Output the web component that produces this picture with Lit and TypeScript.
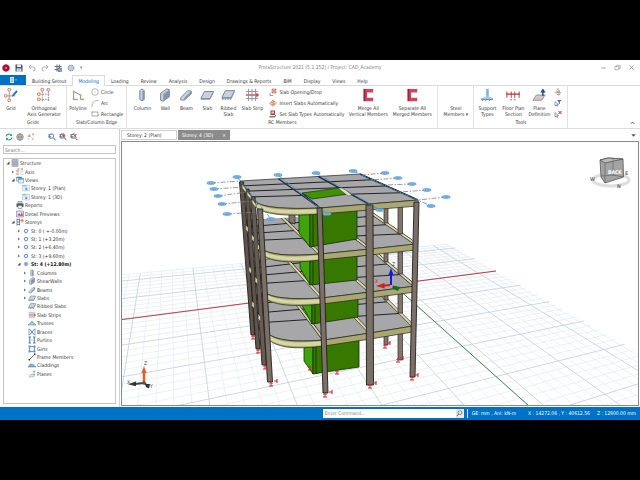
import { LitElement, html, svg, css, nothing, type TemplateResult } from "lit";
import { customElement } from "lit/decorators.js";
import { classMap } from "lit/directives/class-map.js";

type Art = ReturnType<typeof svg>;
type Pt = [number, number];

const pts = (...p: Pt[]) => p.map((q) => q.join(",")).join(" ");
const mix = (a: Pt, b: Pt, t: number): Pt => [a[0] + (b[0] - a[0]) * t, a[1] + (b[1] - a[1]) * t];
const f1 = (n: number) => n.toFixed(1);

/* ---------- icons, drawn on a 16 x 16 board ---------- */
const member = (d: string, side: string) => svg`
  <path d=${d} fill="#c9d1da" stroke="#6a7d90" stroke-width="1"/>
  <path d=${side} fill="#8496aa"/>`;
const bubble = (x: number, y: number) =>
  svg`<circle cx=${x} cy=${y} r="1.7" fill="#fbe3da" stroke="#d0694a" stroke-width=".9"/>`;
const bracket = svg`<path d="M14 1H3v14h11v-4H7V5h7z" fill="#d0455c"/><path d="M3 1h2v14H3z" fill="#9c2540"/>`;
const lens = svg`<circle cx="7" cy="6" r="4.6" fill="#eef4fa" stroke="#4b6177" stroke-width="1.4"/><path d="M10.500 9.500L15 14.500" stroke="#4b6177" stroke-width="2"/>`;
const tree = svg`<path d="M1 3h6M2 3v7h4M1 7h5" stroke="#3f7fb5" stroke-width="1.300" fill="none"/>`;
const cursor = svg`<path d="M2 5v9l2.200-2 1.600 3 1.400-.7-1.500-2.900H9z" fill="#fff" stroke="#333" stroke-width=".9"/>`;

const icons: Record<string, Art> = {
  logo: svg`<path d="M8 0l2 1.500 2.600-.1.800 2.400L15.600 5.400 14.900 8l.7 2.600-2.200 1.600-.8 2.400-2.600-.1L8 16l-2-1.500-2.600.1-.8-2.400L.4 10.600 1.100 8 .4 5.400l2.200-1.600.8-2.400 2.600.1z" fill="#b3092f"/><circle cx="8" cy="8" r="2.500" fill="#e68095"/><circle cx="8" cy="8" r="1.200" fill="#7c0620"/>`,
  save: svg`<path d="M1 1h12l2 2v12H1z" fill="#44566b"/><path d="M4 1h8v5H4z" fill="#e8edf2"/><path d="M3.500 9h9v6h-9z" fill="#fff"/><path d="M5 11h6M5 13h6" stroke="#7a8ea3"/>`,
  undo: svg`<path d="M2 6h8a4 4 0 0 1 0 8M2 6l4-4M2 6l4 4" fill="none" stroke="#9a9a9a" stroke-width="1.500"/>`,
  redo: svg`<path d="M14 6H6a4 4 0 0 0 0 8M14 6l-4-4M14 6l-4 4" fill="none" stroke="#9a9a9a" stroke-width="1.500"/>`,
  frame: svg`<path d="M6 1v14M11 1v14M1 5h14M1 11h10" stroke="#5b7088" stroke-width="2"/><path d="M8 8h7v7H8z" fill="#8fa6bd" stroke="#4a5f75"/>`,
  gear: svg`<circle cx="8" cy="8" r="5.500" fill="none" stroke="#7f96ad" stroke-width="2.500" stroke-dasharray="3 1.300"/><circle cx="8" cy="8" r="4" fill="#eaf0f6" stroke="#7f96ad"/><circle cx="8" cy="8" r="1.500" fill="#7f96ad"/>`,
  grid: svg`<path d="M6 4v9M3 9h10" stroke="#8a949e" stroke-width="1"/>${bubble(6, 2)}${bubble(1.9, 9)}${bubble(6, 14)}<path d="M9 10l1-3 4-4.500 1.800 1.400-4 4.800z" fill="#1d78bd"/>`,
  ortho: svg`<path d="M6 4v11M13 4v11M3 7h12M3 13h12" stroke="#7b8794" stroke-width="1" stroke-dasharray="2 1"/>${bubble(6, 2)}${bubble(13, 2)}${bubble(2, 7)}${bubble(2, 13)}`,
  polyline: svg`<path d="M3 13V4l8 4v5h3M3 13h5" fill="none" stroke="#7c8996" stroke-width="1.100"/><path d="M2 3h2v2H2zM10 7h2v2h-2zM2 12h2v2H2zM13 12h2v2h-2z" fill="#e3a15b"/>`,
  circle: svg`<circle cx="8" cy="8" r="6.600" fill="none" stroke="#8795a4" stroke-width="1.300"/><circle cx="8" cy="8" r="1" fill="#d98b4a"/>`,
  arc: svg`<path d="M2 14Q2 3 14 3" fill="none" stroke="#8795a4" stroke-width="1.300"/><path d="M1 13h2v2H1zM13 2h2v2h-2z" fill="#e3a15b"/>`,
  rect: svg`<path d="M2 4h12v8H2z" fill="none" stroke="#6f7f8f" stroke-width="1.300"/><path d="M1 3h2v2H1zM13 11h2v2h-2z" fill="#e3a15b"/>`,
  column: member("M5.500 3q2.500-3.500 5 0v10q-2.500 3-5 0z", "M8.500 3h2v10q-1 1.500-2 1.500z"),
  wall: member("M3 6l7-5 3 1v8l-7 5-3-1z", "M6 7l7-5v8l-7 5z"),
  beam: member("M2 11L10 3l4 .5v3L6 14l-4-.5z", "M6 11.500l8-8v3L6 14z"),
  slab: member("M1 12L5 4h10.500l-4 8z", "M1 12h10.500l4-8v1.500l-4 8H1z"),
  ribbed: member("M1 11L5 3h10.500l-4 8z", "M1 11h10.500l4-8v2l-4 8.500H10v-1.500H9V13.500H7V12H6v1.500H4V12H3v1.500H1z"),
  strip: svg`<path d="M1 4h14M1 12h14M4 1v14M8 1v14M12 1v14" stroke="#7d92a8" stroke-width="1"/><path d="M1 7h13v2H1z" fill="#df6b64"/><path d="M13 5l3 3-3 3z" fill="#c9403b"/>`,
  opening: svg`<path d="M2 15V9M2 15h6" stroke="#5f7387" stroke-width="1.300"/><path d="M6 2h8v8H6z" fill="#f3cdc7" stroke="#b6463c"/><path d="M6 10l8-8M6 2l8 8" stroke="#b6463c"/>`,
  insert: svg`<path d="M1 9l7-7 7 6-7 7z" fill="#f4d7cd" stroke="#c25a3f"/><path d="M5 10l6 2M5 7l6 2M7 4l4 2" stroke="#c25a3f" stroke-width="1.400"/>`,
  types: svg`<path d="M3 1h9v9H3z" fill="#cf2f2f"/><path d="M5 3h5v4H5z" fill="#f5d0c8"/><path d="M1 12h10l3-3v3l-3 3H1z" fill="#6c7c8c"/>`,
  bracket,
  support: svg`<path d="M7 1h3v11H7z" fill="#7fb6d8"/><path d="M1 12h14v1.500H1z" fill="#4f7f9f"/><path d="M4 13l-2 2M8 13l-2 2M12 13l-2 2" stroke="#4f7f9f"/><path d="M4 10h9v2H4z" fill="#a8d0e6"/>`,
  section: svg`<path d="M1 4v7M15 4v7M6 4v7M10 4v7" stroke="#c0504d" stroke-width="1.200"/><path d="M0 7h16" stroke="#c0392b" stroke-width="1.500"/><path d="M5 13.500h2M9 13.500h2" stroke="#666"/>`,
  plane: svg`<path d="M1 14L5 8h10l-4 6z" fill="#d9c4c0" stroke="#7c8fa3"/><path d="M12.500 9V3" stroke="#174f8a" stroke-width="1.600"/><path d="M9.500 5l3-4.500 3 4.500z" fill="#174f8a"/>`,
  selA: svg`<path d="M8 1l3 6H5z" fill="none" stroke="#c0504d"/><path d="M1 9h13M10 5v9" stroke="#666"/><path d="M5 12q4 4 8 0" fill="none" stroke="#d0694a" stroke-width="1.500"/>`,
  selB: svg`${cursor}<path d="M6 2h9l-3.500 4v4h-2V6z" fill="#1d78bd"/>`,
  selC: svg`${cursor}<path d="M9 2l6 6M15 2L9 8" stroke="#d0202e" stroke-width="2"/>`,
  refresh: svg`<path d="M2 7a6 6 0 0 1 11-2M14 9a6 6 0 0 1-11 2" fill="none" stroke="#25a39b" stroke-width="2.200"/><path d="M14 1v5H9zM2 15v-5h5z" fill="#25a39b"/>`,
  globe: svg`<circle cx="8" cy="8" r="6.500" fill="#d7e6ea" stroke="#4d6470" stroke-width="1.200"/><path d="M1.500 8h13M8 1.500v13" stroke="#b3563f" stroke-width="1.300"/><ellipse cx="8" cy="8" rx="3.200" ry="6.500" fill="none" stroke="#4c8a60"/>`,
  sort: svg`<path d="M2 8l3-5 2 5M3 6.500h3M10 1l4 2-3 1" fill="none" stroke="#c75c52" stroke-width="1.200"/><path d="M1 12h4M9 9l4 5M13 9l-3 5" stroke="#e09289" stroke-width="1.200"/>`,
  findA: svg`${lens}${tree}`,
  findB: svg`${lens}${tree}<path d="M9 1l4 4h-2v4H7V5H5z" fill="#e2503b"/>`,
  findC: svg`${lens}${tree}<path d="M6 2l7 7M13 2L6 9" stroke="#dd5a3c" stroke-width="2"/>`,
  structure: svg`<path d="M2 1h12v14H2z" fill="#dbe4ed"/><path d="M2 1v14M6 1v14M10 1v14M14 1v14M2 1.500h12M2 6h12M2 10h12M2 14.500h12" stroke="#5b738c" stroke-width="1.100"/>`,
  axis: svg`<path d="M5 3v12M12 3v12M2 6h13M2 12h13" stroke="#9aa6b2" stroke-dasharray="2 1"/>${bubble(5, 2)}${bubble(12, 2)}${bubble(2, 6)}${bubble(2, 12)}`,
  views: svg`<path d="M1 2h10v8H1z" fill="#cfe3f3" stroke="#4a86b5"/><path d="M5 5h10v9H5z" fill="#e3f0fa" stroke="#4a86b5"/><path d="M1 2h10v2H1zM5 5h10v2H5z" fill="#3f81b3"/>`,
  view: svg`<path d="M1 2h14v12H1z" fill="#e0eef8" stroke="#a9c5da"/><path d="M1 2h8v3H1z" fill="#9fc1da"/><path d="M6 10h5M8.500 7.500v5" stroke="#4a7ca3" stroke-width="1.500"/>`,
  print: svg`<path d="M4 1h8v4H4z" fill="#dde3e8" stroke="#555"/><path d="M1 5h14v7H1z" fill="#4b5a62"/><path d="M4 9h8v6H4z" fill="#e7f1e9" stroke="#5b7a66"/>`,
  detail: svg`<path d="M1 2h14v12H1z" fill="#e9dff0" stroke="#6d5f96"/><path d="M3 11l3-5 3 4 3-6 2 8z" fill="#b2556b"/>`,
  storeys: svg`<path d="M2 1v14M7 1v14M2 3h5M2 8h5M2 13h5" stroke="#50677f" stroke-width="1.500"/><path d="M12 1v8M8.500 5h7M9.500 2.500l5 5M14.500 2.500l-5 5" stroke="#d9662f" stroke-width="1.300"/>`,
  storey: svg`<circle cx="8" cy="8" r="3.500" fill="#eef3fd" stroke="#5b80d6" stroke-width="1.800"/>`,
  storeyOn: svg`<circle cx="8" cy="8" r="3.800" fill="#7d97e0" stroke="#a9bcf0" stroke-width="1.500"/>`,
  truss: svg`<path d="M0 12L8 5l8 7z" fill="#c6dfee" stroke="#4f88ad" stroke-width="1.200"/><path d="M4 12l4-7 4 7" fill="none" stroke="#4f88ad"/>`,
  brace: svg`<path d="M2 1v14M14 1v14" stroke="#6f8aa3" stroke-width="1.500"/><path d="M3 2l10 12M13 2L3 14" stroke="#3176b8" stroke-width="1.700"/>`,
  purlin: svg`<path d="M1 2h5M1 14h5M10 2h5M10 14h5M3.500 2v12M12.500 2v12" stroke="#3f7fb5" stroke-width="2" fill="none"/><path d="M4 8h8" stroke="#a8c6de" stroke-width="1.500"/>`,
  girt: svg`<path d="M3 3h10v10H3z" fill="#eef6fb" stroke="#3f7fb5" stroke-width="1.500"/><path d="M1 1h4v4H1zM11 1h4v4h-4zM1 11h4v4H1zM11 11h4v4h-4z" fill="#5e93bb"/>`,
  member: svg`<path d="M2 14L14 2" stroke="#7a2d3d" stroke-width="1.500"/><path d="M1 12h3v3H1zM12 1h3v3h-3z" fill="#3a2b30"/>`,
  cladding: svg`<path d="M0 12Q4 4 8 6t8 6z" fill="#86b4cf" stroke="#3f7a9c"/>`,
  planes: svg`<path d="M2 14l3-5h9l-3 5z" fill="#dbe3ea" stroke="#8796a5"/><path d="M12 10V2M10 4l2-3 2 3" stroke="#71869b" fill="none" stroke-width="1.200"/>`,
  menu: svg`<path d="M2 2h8v12H2z" fill="#dcebf8"/><path d="M3.500 5h5M3.500 8h5M3.500 11h5" stroke="#2a7fc6"/><path d="M12 7h4l-2 2.500z" fill="#bcd9f0"/>`,
  minimise: svg`<path d="M3 9h10" stroke="#777" stroke-width="1.500"/>`,
  restore: svg`<path d="M2 6h9v7H2zM5 6V3h9v7h-3" fill="none" stroke="#888" stroke-width="1.300"/>`,
  close: svg`<path d="M3 3l10 10M13 3L3 13" stroke="#777" stroke-width="1.400"/>`,
  magnify: svg`<circle cx="9" cy="6" r="4.500" fill="none" stroke="#555" stroke-width="1.500"/><path d="M6 9l-4 5" stroke="#555" stroke-width="2"/>`,
  up: svg`<path d="M4 11l4-4 4 4" fill="none" stroke="#444" stroke-width="2"/>`,
  down: svg`<path d="M3 5h10l-5 6z" fill="#555"/>`,
};

const icon = (name: string, size = "s8") =>
  html`<svg class="ico ${size}" viewBox="0 0 16 16" aria-hidden="true">${icons[name]}</svg>`;

/* ---------- the 3D view ---------- */

/* Ground plane: a perspective map from grid units to the canvas. */
const ground = (u: number, v: number): Pt => {
  const s = (u - 1) / 6.5;
  const t = v / 3;
  const w = 1 + 0.341 * s - 0.285 * t;
  return [(198 + 467 * s - 48.6 * t) / w, (309.7 + 53.7 * s - 24.4 * t) / w];
};

const groundLines = () => {
  const out: Art[] = [];
  const line = (a: Pt, b: Pt, major: boolean) =>
    out.push(svg`<line x1=${f1(a[0])} y1=${f1(a[1])} x2=${f1(b[0])} y2=${f1(b[1])}
      stroke=${major ? "#c0cfdc" : "#e4ebf2"} stroke-width=${major ? 0.8 : 0.7}/>`);
  for (const pass of [false, true]) {
    for (let i = -14; i <= 37; i++) {
      const major = i % 5 === 0;
      if (major === pass) line(ground(i / 5, -2.4), ground(i / 5, 6.6), major);
    }
    for (let i = -12; i <= 33; i++) {
      const major = i % 5 === 0;
      if (major === pass) line(ground(-2.9, i / 5), ground(7.5, i / 5), major);
    }
  }
  return out;
};

interface Floor { bl: Pt; br: Pt; fr: Pt; c2: Pt; c3: Pt; q: Pt; l: Pt }
const floors: Floor[] = [
  { bl: [240, 181], br: [360, 174], fr: [418, 200], c2: [369, 204], c3: [320, 208], q: [270, 210], l: [257, 203] },
  { bl: [243, 221], br: [364, 208], fr: [416, 244], c2: [370, 249], c3: [320, 254], q: [272, 258], l: [260, 248] },
  { bl: [246, 262], br: [366, 245], fr: [415, 286], c2: [370, 292], c3: [322, 298], q: [275, 301], l: [264, 292] },
  { bl: [249, 296], br: [368, 281], fr: [413, 326], c2: [370, 333], c3: [324, 340], q: [279, 344], l: [267, 333] },
];

const slab = (f: Floor, roof: boolean) => {
  const p = (a: Pt) => `${f1(a[0])} ${f1(a[1])}`;
  const drop = (a: Pt, d: number): Pt => [a[0], a[1] + d];
  const outline = `M${p(f.bl)}L${p(f.br)}L${p(f.fr)}L${p(f.c2)}L${p(f.c3)}Q${p(f.q)} ${p(f.l)}Z`;
  const band = `M${p(f.fr)}L${p(f.c2)}L${p(f.c3)}Q${p(f.q)} ${p(f.l)}L${p(drop(f.l, 5))}Q${p(drop(f.q, 8))} ${p(drop(f.c3, 6))}L${p(drop(f.c2, 6))}L${p(drop(f.fr, 6))}Z`;
  const bays: [Pt, Pt][] = [
    [mix(f.bl, f.br, 0.32), f.c3],
    [mix(f.bl, f.br, 0.65), f.c2],
    [f.br, f.fr],
  ];
  return svg`
    <path d=${outline} fill="#a7a6a9" stroke="#222" stroke-width=".7"/>
    ${[0.22, 0.46, 0.72].map((t) => {
      const a = mix(f.bl, f.l, t);
      const b = mix(f.br, f.fr, t);
      return svg`<line x1=${a[0]} y1=${a[1]} x2=${b[0]} y2=${b[1]} stroke="#222" stroke-width="1"/>`;
    })}
    ${bays.map(([a, b]) => roof
      ? svg`<line x1=${a[0]} y1=${a[1]} x2=${b[0]} y2=${b[1]} stroke="#20323f" stroke-width="1.500"/>`
      : svg`<line x1=${a[0]} y1=${a[1]} x2=${b[0]} y2=${b[1]} stroke="#222" stroke-width="3"/>
            <line x1=${a[0]} y1=${a[1]} x2=${b[0]} y2=${b[1]} stroke="#dcdca4" stroke-width="1.900"/>`)}
    <path d=${band} fill="#a9a872" stroke="#26261a" stroke-width=".7"/>
    <path d="M${p(drop(f.c3, 3))}Q${p(drop(f.q, 4))} ${p(drop(f.l, 2.5))}" fill="none" stroke="#d6d6a2" stroke-width="3.800"/>`;
};

/* One storey of the core wall with the rear columns beside it. */
const storey = (top: number, side: [number, number, number, number], front: [number, number, number, number], feet: [number, number]) => svg`
  <polygon points=${pts([398, top], [402.5, top], [402.5, feet[0]], [398, feet[0]])} fill="#81766d" stroke="#2b2622" stroke-width=".7"/>
  <polygon points=${pts([384, top], [388, top], [388, feet[1]], [384, feet[1]])} fill="#81766d" stroke="#2b2622" stroke-width=".7"/>
  <polygon points=${pts([side[0], top], [side[1], top], [side[1], side[3]], [side[0], side[2]])} fill="#3fa40b" stroke="#123003" stroke-width=".8"/>
  <polygon points=${pts([front[0], top], [front[1], top], [front[1], front[3]], [front[0], front[2]])} fill="#377800" stroke="#123003" stroke-width=".8"/>
  <line x1=${front[0] + 3} y1=${top} x2=${front[0] + 3} y2=${front[2]} stroke="#123003" stroke-width=".8"/>`;

const column = (a: Pt, b: Pt, w: number, fill = "#7b7067") => svg`
  <polygon points=${pts(a, [a[0] + w, a[1]], [b[0] + w, b[1]], b)} fill=${fill} stroke="#231f1c" stroke-width=".9"/>`;

const feet: Pt[] = [[253, 338], [258, 352], [265, 368], [271, 385], [325, 396], [310, 369], [337, 373], [370, 387], [385, 347], [398, 361], [412, 379]];
const ends: Pt[] = [[277, 381], [332, 392], [376, 383], [390, 343], [403, 358], [418, 375]];
const support = ([x, y]: Pt) => svg`<path d="M${x} ${y - 3}v4M${x - 2} ${y + 1}h4M${x - 1.5} ${y - 1}l1.500-1.500 1.500 1.500" fill="none" stroke="#e0202c" stroke-width="1"/>`;
const endMark = ([x, y]: Pt) => svg`<path d="M${x - 3} ${y}h3M${x} ${y - 2}v4" fill="none" stroke="#e0202c" stroke-width="1.100"/>`;

const axes: { from: Pt; to: Pt; blue?: boolean }[] = [
  { from: [237, 177], to: [271, 219], blue: true },
  { from: [278, 175], to: [327, 214], blue: true },
  { from: [316, 173], to: [380, 210], blue: true },
  { from: [353, 171], to: [431, 206], blue: true },
  { from: [211, 183], to: [240, 181] },
  { from: [214, 189], to: [243, 187] },
  { from: [218, 196], to: [247, 192] },
  { from: [222, 204], to: [252, 201] },
  { from: [227, 214], to: [257, 212] },
  { from: [385, 173], to: [362, 175] },
  { from: [398, 178], to: [372, 180] },
  { from: [412, 184], to: [385, 185] },
  { from: [427, 190], to: [400, 192] },
  { from: [446, 197], to: [418, 200] },
];
const tag = ([x, y]: Pt) => svg`<ellipse cx=${x} cy=${y} rx="4.200" ry="1.300" fill="#9fcdf0" stroke="#3d8fd0" stroke-width=".8"/><path d="M${x - 2} ${y}h4" stroke="#2b7cc0" stroke-width=".6"/>`;

const scene = () => svg`
  ${groundLines()}
  <line x1="122" y1="319.500" x2="496" y2="271" stroke="#cf3a40" stroke-width="1"/>
  <line x1="396" y1="287" x2="529" y2="406" stroke="#3b8a43" stroke-width="1"/>
  ${storey(330, [304, 313, 361, 374], [313, 359, 374, 367], [360, 345])}
  ${slab(floors[3], false)}
  ${storey(285, [302, 312, 305, 324], [312, 358, 324, 317], [313, 300])}
  ${slab(floors[2], false)}
  ${storey(245, [300, 310, 268, 285], [310, 357, 285, 280], [274, 262])}
  ${slab(floors[1], false)}
  <polygon points="263,205 300,205 298,217 263,219" fill="#fff"/>
  <polygon points="289,205 295,205 295,224 289,222" fill="#81766d" stroke="#2b2622" stroke-width=".7"/>
  ${storey(200, [299, 310, 233, 247], [310, 357, 247, 239], [234, 223])}
  ${slab(floors[0], true)}
  <polygon points="302,193 338,188 348,194 312,199" fill="#3f9106" stroke="#1c2b10" stroke-width=".7"/>
  <polygon points="338,188 343,188 352,195 348,196" fill="#e2e2b0" stroke="#333" stroke-width=".4"/>
  <line x1="302" y1="193.500" x2="318" y2="206" stroke="#20323f" stroke-width="1.500"/>
  ${column([239.500, 182], [251, 335], 4, "#5e554d")}
  ${column([245, 189], [256, 349], 4, "#5e554d")}
  ${column([250.500, 197], [262, 365], 4.5, "#665c54")}
  ${floors.slice(1).map((f) => [0.1, 0.45, 0.8].map((t) => {
    const a = mix(f.bl, f.l, t);
    return svg`<polygon points=${pts([a[0] + 1, a[1] + 1], [a[0] + 3.5, a[1] + 4], [a[0] + 3.5, a[1] + 9], [a[0] + 1, a[1] + 6])} fill="#d9d9a4" stroke="#222" stroke-width=".5"/>`;
  }))}
  ${[[242, 184], [247, 191], [252, 199]].map(([x, y]) => svg`<polygon points=${pts([x, y], [x + 4, y + 5], [x + 4, y + 9], [x, y + 4])} fill="#d9d9a4" stroke="#222" stroke-width=".5"/>`)}
  ${column([257.500, 209], [267.500, 382], 5)}
  ${column([317, 208], [323, 393], 5)}
  ${column([366, 205], [366.500, 385], 7)}
  ${column([414, 202], [410, 377], 5)}
  ${feet.map(support)}${ends.map(endMark)}
  ${axes.map((a) => svg`<line x1=${a.from[0]} y1=${a.from[1]} x2=${a.to[0]} y2=${a.to[1]}
    stroke=${a.blue ? "#2f8ccf" : "#8c7f78"} stroke-width=".8" stroke-dasharray="5 1.500 1.500 1.500"/>${tag(a.from)}${a.blue ? tag(a.to) : nothing}`)}
  <g>
    <path d="M391 285V273" stroke="#1518e0" stroke-width="2"/><path d="M388.500 275l2.500-7 2.500 7z" fill="#1518e0"/>
    <path d="M390 285l-7 .8" stroke="#d51d1d" stroke-width="2"/><path d="M384.500 283l-8.500 3 8.500 2.500z" fill="#e01717"/>
    <path d="M393 285.500l7 1.500-2 4-6-2.500z" fill="#156b1d"/>
    <text x="392" y="266" class="mark">Z</text><text x="375" y="283" class="mark red">X</text>
  </g>
  <g>
    <path d="M144 383V372" stroke="#ee5a1c" stroke-width="2.500"/><path d="M141.500 373l2.500-7 2.500 7z" fill="#ee5a1c"/>
    <path d="M144 383l-9 1" stroke="#444" stroke-width="2"/><path d="M136 381.500l-8 2.700 8 2z" fill="#333"/>
    <path d="M144 383l3 2" stroke="#444" stroke-width="2"/><path d="M145 384l5 0-1 4.500-3-1.500z" fill="#333"/>
    <circle cx="144" cy="383" r="1.800" fill="#555"/>
    <text x="144" y="365" class="mark">Z</text><text x="127" y="384" class="mark">X</text><text x="150" y="388" class="mark">Y</text>
  </g>
  <g>
    <ellipse cx="611" cy="180" rx="18" ry="6" fill="none" stroke="#dedede" stroke-width="3"/>
    <polygon points="600,160 608,158 623,159 623.500,177 605,183 601,177" fill="#a3a3a3" stroke="#555" stroke-width=".8"/>
    <polygon points="600,160 608,158 623,159 605,163" fill="#bcbcbc" stroke="#555" stroke-width=".8"/>
    <path d="M605 163v20M613 158.500V176M601 176l12-1 10 2" stroke="#666" stroke-width=".7" fill="none"/>
    <text x="608" y="174" class="face">BACK</text>
    <text x="590" y="181" class="side">W</text><text x="617" y="188" class="side">N</text><text x="625" y="175" class="side">E</text>
  </g>`;

/* ---------- data ---------- */
interface Node { depth: number; icon: string; label: string; arrow?: "open" | "shut"; on?: boolean }
const nodes: Node[] = [
  { depth: 0, icon: "structure", label: "Structure", arrow: "open" },
  { depth: 1, icon: "axis", label: "Axis", arrow: "shut" },
  { depth: 1, icon: "views", label: "Views", arrow: "open" },
  { depth: 2, icon: "view", label: "Storey: 1 (Plan)" },
  { depth: 2, icon: "view", label: "Storey: 1 (3D)" },
  { depth: 1, icon: "print", label: "Reports" },
  { depth: 1, icon: "detail", label: "Detail Previews" },
  { depth: 1, icon: "storeys", label: "Storeys", arrow: "open" },
  { depth: 2, icon: "storey", label: "St: 0 ( +-0.00m)", arrow: "shut" },
  { depth: 2, icon: "storey", label: "St: 1 (+3.20m)", arrow: "shut" },
  { depth: 2, icon: "storey", label: "St: 2 (+6.40m)", arrow: "shut" },
  { depth: 2, icon: "storey", label: "St: 3 (+9.60m)", arrow: "shut" },
  { depth: 2, icon: "storeyOn", label: "St: 4 (+12.80m)", arrow: "open", on: true },
  { depth: 3, icon: "column", label: "Columns", arrow: "shut" },
  { depth: 3, icon: "wall", label: "ShearWalls", arrow: "shut" },
  { depth: 3, icon: "beam", label: "Beams", arrow: "shut" },
  { depth: 3, icon: "slab", label: "Slabs", arrow: "shut" },
  { depth: 3, icon: "ribbed", label: "Ribbed Slabs" },
  { depth: 3, icon: "strip", label: "Slab Strips" },
  { depth: 3, icon: "truss", label: "Trusses" },
  { depth: 3, icon: "brace", label: "Braces" },
  { depth: 3, icon: "purlin", label: "Purlins" },
  { depth: 3, icon: "girt", label: "Girts" },
  { depth: 3, icon: "member", label: "Frame Members" },
  { depth: 3, icon: "cladding", label: "Claddings" },
  { depth: 3, icon: "planes", label: "Planes" },
];
const tabs = ["Building Setout", "Modeling", "Loading", "Review", "Analysis", "Design", "Drawings & Reports", "BIM", "Display", "Views", "Help"];

const base = css`
  * { box-sizing: border-box; }
  button, input { font: inherit; color: inherit; border: 0; padding: 0; margin: 0; background: none; }
  button { cursor: pointer; }
  .ico { display: block; flex: none; width: 8px; height: 8px; }
  .s7 { width: 7px; height: 7px; }
  .s14 { width: 14px; height: 14px; }
`;

@customElement("ribbon-bar")
class RibbonBar extends LitElement {
  static styles = [base, css`
    :host { display: block; }
    .title { display: grid; grid-template-columns: 1fr auto 1fr; align-items: center; height: 15px; color: #808080; }
    .quick { display: flex; align-items: center; gap: 5px; padding-left: 2px; }
    .window { display: flex; justify-content: flex-end; gap: 7px; padding-right: 5px; }
    .tabs { display: flex; height: 11px; border-bottom: 1px solid #dcdcdc; }
    .file { display: flex; align-items: center; justify-content: center; width: 26px; height: 10px; background: #0072c6; }
    .tab { padding: 0 6px; line-height: 10px; height: 11px; border: 0 solid #dcdcdc; white-space: nowrap; }
    .tab.on { background: #fff; border-width: 1px 1px 0; padding: 0 5px; color: #0072c6; line-height: 9px; }
    .ribbon { display: flex; height: 43px; border-bottom: 1px solid #dcdcdc; }
    .group { display: flex; flex-direction: column; justify-content: space-between; border-right: 1px solid #e2e2e2; padding: 2px 0; }
    .caption { text-align: center; line-height: 7px; min-height: 7px; }
    .body { display: flex; }
    .edge { padding-right: 3px; }
    .members { padding: 0 3px 0 2px; }
    .tools { padding-right: 5px; }
    .big { display: flex; flex-direction: column; align-items: center; line-height: 6px; text-align: center; white-space: pre-line; gap: 3px; }
    .w20 { width: 20px; } .w22 { width: 22px; } .w26 { width: 26px; } .w35 { width: 35px; } .w44 { width: 44px; }
    .list { display: flex; flex-direction: column; gap: 3px; padding-left: 2px; }
    .wide { padding: 0 2px 0 4px; }
    .small { display: flex; align-items: center; gap: 2px; height: 8px; line-height: 8px; white-space: nowrap; }
    .blank { height: 14px; }
    .fold { display: flex; flex: 1; align-items: flex-end; justify-content: flex-end; padding: 0 4px 2px 0; }
  `];

  big(name: string, label: string, width: string) {
    return html`<button class="big ${width}">${name ? icon(name, "s14") : html`<span class="blank"></span>`}<span>${label}</span></button>`;
  }
  small(name: string, label: string) {
    return html`<button class="small" aria-label=${label || name}>${icon(name)}${label}</button>`;
  }
  group(caption: string, body: TemplateResult, cls = "") {
    return html`<section class="group"><div class="body ${cls}">${body}</div><div class="caption">${caption}</div></section>`;
  }
  render() {
    return html`
      <header class="title">
        <div class="quick">
          <button aria-label="Home">${icon("logo")}</button><button aria-label="Save">${icon("save")}</button>
          <button aria-label="Undo">${icon("undo")}</button><button aria-label="Redo">${icon("redo")}</button>
          <button aria-label="Frames">${icon("frame")}</button><button aria-label="Settings">${icon("gear")}</button>
          <button aria-label="More">▾</button>
        </div>
        <span>ProtaStructure 2021 (5.1.252) / Project: CAD_Academy</span>
        <div class="window">
          <button aria-label="Minimise">${icon("minimise", "s7")}</button><button aria-label="Restore">${icon("restore", "s7")}</button>
          <button aria-label="Close">${icon("close", "s7")}</button>
        </div>
      </header>
      <nav class="tabs">
        <button class="file" aria-label="File">${icon("menu")}</button>
        ${tabs.map((t) => html`<button class=${classMap({ tab: true, on: t === "Modeling" })}>${t}</button>`)}
      </nav>
      <div class="ribbon">
        ${this.group("Grids", html`${this.big("grid", "Grid", "w22")}${this.big("ortho", "Orthogonal\nAxis Generator", "w44")}`)}
        ${this.group("Slab/Column Edge", html`${this.big("polyline", "Polyline", "w22")}
          <div class="list">${this.small("circle", "Circle")}${this.small("arc", "Arc")}${this.small("rect", "Rectangle")}</div>`, "edge")}
        ${this.group("RC Members", html`
          ${this.big("column", "Column", "w26")}${this.big("wall", "Wall", "w20")}${this.big("beam", "Beam", "w22")}
          ${this.big("slab", "Slab", "w20")}${this.big("ribbed", "Ribbed\nSlab", "w22")}${this.big("strip", "Slab Strip", "w26")}
          <div class="list wide">${this.small("opening", "Slab Opening/Drop")}${this.small("insert", "Insert Slabs Automatically")}${this.small("types", "Set Slab Types Automatically")}</div>
          ${this.big("bracket", "Merge All\nVertical Members", "w44")}${this.big("bracket", "Separate All\nMerged Members", "w44")}`, "members")}
        ${this.group("", this.big("", "Steel\nMembers ▾", "w35"))}
        ${this.group("Tools", html`${this.big("support", "Support\nTypes", "w26")}${this.big("section", "Floor Plan\nSection", "w26")}${this.big("plane", "Plane\nDefinition", "w26")}
          <div class="list">${this.small("selA", "")}${this.small("selB", "")}${this.small("selC", "")}</div>`, "tools")}
        <div class="fold"><button aria-label="Collapse ribbon">${icon("up", "s7")}</button></div>
      </div>`;
  }
}

@customElement("model-tree")
class ModelTree extends LitElement {
  static styles = [base, css`
    :host { display: flex; flex-direction: column; gap: 4px; padding: 2px 3px 3px; }
    .tools { display: flex; gap: 3px; padding: 1px 2px 0; height: 10px; }
    .next { margin-left: 10px; }
    .search { width: 100%; height: 9px; border: 1px solid #c4c4c4; padding: 0 1px; background: #fff; }
    .search::placeholder { color: #777; opacity: 1; }
    .tree { flex: 1; display: grid; grid-auto-rows: 1fr; margin: 0; padding: 0 0 25px; list-style: none; border: 1px solid #c4c4c4; }
    .node { display: flex; align-items: center; gap: 1px; line-height: 8px; padding-left: 2px; }
    .d1 { padding-left: 7px; } .d2 { padding-left: 13px; } .d3 { padding-left: 19px; }
    .node.on { font-weight: bold; color: #111; }
    .arrow { width: 4px; height: 4px; flex: none; }
  `];
  render() {
    return html`
      <div class="tools">
        <button aria-label="Refresh">${icon("refresh")}</button><button aria-label="World">${icon("globe")}</button>
        <button aria-label="Sort">${icon("sort")}</button>
        <button class="next" aria-label="Find">${icon("findA")}</button><button aria-label="Find up">${icon("findB")}</button>
        <button aria-label="Clear find">${icon("findC")}</button>
      </div>
      <input class="search" type="text" aria-label="Search" placeholder="Search..." />
      <ul class="tree" role="tree">
        ${nodes.map((n) => html`<li role="treeitem" class="node d${n.depth} ${n.on ? "on" : ""}">
          <svg class="arrow" viewBox="0 0 8 8">${n.arrow === "open" ? svg`<path d="M7 1v6H1z" fill="#444"/>` : n.arrow ? svg`<path d="M2 1l4 3-4 3z" fill="#777"/>` : nothing}</svg>
          ${icon(n.icon)}<span>${n.label}</span></li>`)}
      </ul>`;
  }
}

@customElement("model-view")
class ModelView extends LitElement {
  static styles = [base, css`
    :host { display: flex; flex-direction: column; min-width: 0; padding: 1px; }
    .docs { display: flex; align-items: flex-end; height: 11px; padding-bottom: 1px; gap: 1px; }
    .doc { display: flex; align-items: center; justify-content: space-between; width: 56px; height: 10px; padding: 0 5px; border: 1px solid #cfcfcf; background: #fff; white-space: nowrap; }
    .doc.on { width: 52px; background: #8b8b8b; border-color: #8b8b8b; color: #fff; padding: 0 3px; }
    .more { margin-left: auto; align-self: center; padding-right: 2px; }
    .canvas { flex: 1; min-height: 0; border: 1px solid #8a8a8a; background: #fff; overflow: hidden; }
    .scene { display: block; width: 100%; height: 100%; }
    .mark { font-size: 5px; fill: #444; }
    .red { fill: #c22; }
    .face { font-size: 5px; font-weight: bold; fill: #fff; }
    .side { font-size: 5px; font-weight: bold; fill: #777; }
  `];
  render() {
    return html`
      <div class="docs" role="tablist">
        <button class="doc" role="tab">Storey: 2 (Plan)</button>
        <button class="doc on" role="tab" aria-selected="true">Storey: 4 (3D)<span>×</span></button>
        <button class="more" aria-label="Open views">${icon("down", "s7")}</button>
      </div>
      <div class="canvas"><svg class="scene" viewBox="122 142 516 263" preserveAspectRatio="xMidYMid slice" role="img" aria-label="Building model">${scene()}</svg></div>`;
  }
}

@customElement("app-root")
class AppRoot extends LitElement {
  static styles = [base, css`
    :host { display: flex; flex-direction: column; min-height: 100vh; padding: 60px 0; background: #000; box-sizing: border-box;
      font: 5px/7px "DejaVu Sans Condensed", "Liberation Sans", sans-serif; color: #383838; }
    .frame { flex: 1; display: flex; flex-direction: column; background: #fff; }
    .work { flex: 1; display: grid; grid-template-columns: 120px 1fr; }
    .side { border-right: 1px solid #d0d0d0; }
    .status { display: flex; align-items: center; justify-content: flex-end; height: 13px; background: #0072c6; color: #fff; white-space: nowrap; }
    .command { display: flex; width: 141px; height: 9px; background: #fff; color: #555; }
    .entry { flex: 1; min-width: 0; padding: 0 2px; }
    .entry::placeholder { color: #8a8a8a; opacity: 1; }
    .go { width: 8px; display: flex; align-items: center; justify-content: center; background: #e8e8e8; }
    .units { border-left: 1px solid #cfe3f4; margin-left: 3px; padding: 0 12px 0 4px; line-height: 9px; }
    .coord { padding-right: 7px; }
    .coord.end { padding-right: 4px; }
  `];
  render() {
    return html`
      <main class="frame">
        <ribbon-bar></ribbon-bar>
        <div class="work"><model-tree class="side"></model-tree><model-view></model-view></div>
        <footer class="status">
          <div class="command"><input class="entry" aria-label="Command" placeholder="Enter Command..." /><button class="go" aria-label="Run">${icon("magnify", "s7")}</button></div>
          <span class="units">GE: mm , Ani: kN-m</span><span class="coord">X : 14272.06 , Y : 40612.56</span><span class="coord end">Z : 12800.00 mm</span>
        </footer>
      </main>`;
  }
}
